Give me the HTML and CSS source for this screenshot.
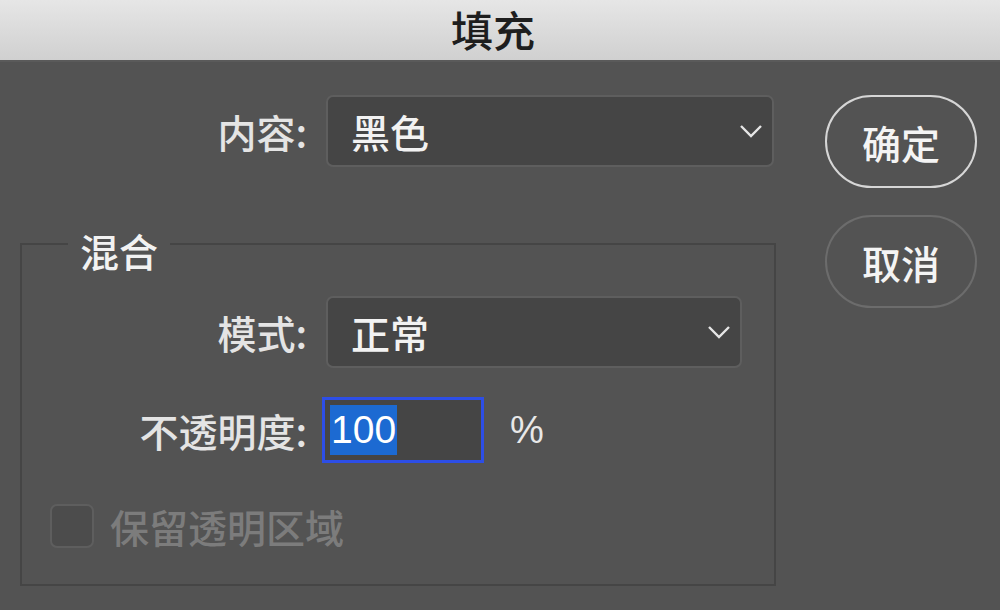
FILE: index.html
```html
<!DOCTYPE html>
<html lang="zh-CN">
<head>
<meta charset="utf-8">
<title>填充</title>
<link rel="stylesheet" href="styles.css">
</head>
<body>
<div class="titlebar">填充</div>
<div class="dialog">
  <div class="main">
    <div class="row row-content">
      <span class="label">内容:</span>
      <div class="select select-wide"><span class="value">黑色</span>
        <svg class="chev" width="24" height="15" viewBox="0 0 24 15"><path d="M2 2 L12 12 L22 2" fill="none" stroke="#e6e6e6" stroke-width="2.4"/></svg>
      </div>
    </div>
    <fieldset class="group">
      <legend>混合</legend>
      <div class="row row-mode">
        <span class="label">模式:</span>
        <div class="select select-mode"><span class="value">正常</span>
          <svg class="chev" width="24" height="15" viewBox="0 0 24 15"><path d="M2 2 L12 12 L22 2" fill="none" stroke="#e6e6e6" stroke-width="2.4"/></svg>
        </div>
      </div>
      <div class="row row-opacity">
        <span class="label">不透明度:</span>
        <div class="input"><span class="sel">100</span></div>
        <span class="pct">%</span>
      </div>
      <div class="row row-check">
        <span class="checkbox"></span>
        <span class="check-label">保留透明区域</span>
      </div>
    </fieldset>
  </div>
  <div class="buttons">
    <div class="btn btn-ok">确定</div>
    <div class="btn btn-cancel">取消</div>
  </div>
</div>
</body>
</html>
```

FILE: styles.css
```css
html, body {
  margin: 0;
  padding: 0;
  height: 100%;
}
body {
  background: #535353;
  font-family: "Noto Sans CJK SC", "Noto Sans", sans-serif;
  color: #e8e8e8;
  overflow: hidden;
}
.titlebar {
  box-sizing: border-box;
  height: 62px;
  background: linear-gradient(#e6e6e6, #d0d0d0);
  border-bottom: 2px solid #5a5a5a;
  color: #1e1e1e;
  font-size: 42px;
  font-weight: 500;
  line-height: 58px;
  text-align: center;
  padding-right: 14px;
}
.dialog {
  display: flex;
  padding: 33px 0 0 20px;
}
.main {
  width: 756px;
}
.row {
  display: flex;
  align-items: center;
}
.label {
  font-size: 39px;
  font-weight: 500;
  text-align: right;
  color: #e4e4e4;
  line-height: 1.2;
}
.row-content .label {
  width: 287px;
  margin-right: 19px;
}
.select {
  box-sizing: border-box;
  height: 72px;
  background: #454545;
  border: 2px solid #5e5e5e;
  border-radius: 7px;
  display: flex;
  align-items: center;
  padding: 0 9px 0 23px;
  justify-content: space-between;
}
.select .value {
  font-size: 39px;
  font-weight: 500;
  color: #f2f2f2;
  line-height: 1.2;
}
.select-wide {
  width: 448px;
}
.group {
  margin: 51px 0 0 0;
  padding: 0;
  border: 2px solid #454545;
  height: 368px;
  box-sizing: border-box;
}
.group legend {
  margin-left: 46px;
  padding: 12px 12px 0;
  font-size: 39px;
  font-weight: 500;
  line-height: 40px;
  color: #f2f2f2;
}
.row-mode {
  margin-top: 26px;
}
.row-mode .label, .row-opacity .label {
  width: 285px;
  margin-right: 19px;
}
.select-mode {
  width: 416px;
}
.row-opacity {
  margin-top: 29px;
}
.input {
  box-sizing: border-box;
  width: 162px;
  height: 66px;
  margin-left: -4px;
  border: 3px solid #2d4ee6;
  background: #454545;
  display: flex;
  align-items: center;
  padding-left: 5px;
}
.input .sel {
  background: #1c6ad2;
  color: #fff;
  font-family: "Liberation Sans", "Noto Sans", sans-serif;
  font-size: 39px;
  line-height: 50px;
  padding: 0 1px;
}
.pct {
  margin-left: 26px;
  font-family: "Liberation Sans", "Noto Sans", sans-serif;
  font-size: 38px;
  color: #e8e8e8;
}
.row-check {
  margin-top: 40px;
  padding-left: 28px;
}
.checkbox {
  box-sizing: border-box;
  width: 44px;
  height: 44px;
  border: 2px solid #5e5e5e;
  background: #4c4c4c;
  border-radius: 7px;
}
.check-label {
  margin-left: 16px;
  font-size: 39px;
  font-weight: 500;
  color: #7c7c7c;
  line-height: 1.2;
}
.buttons {
  margin-left: 49px;
  display: flex;
  flex-direction: column;
  gap: 27px;
}
.btn {
  box-sizing: border-box;
  width: 152px;
  height: 93px;
  border-radius: 47px;
  display: flex;
  align-items: center;
  justify-content: center;
  font-size: 39px;
  font-weight: 500;
  color: #f4f4f4;
}
.btn-ok {
  border: 2px solid #d6d6d6;
}
.btn-cancel {
  border: 2px solid #6c6c6c;
}
```
